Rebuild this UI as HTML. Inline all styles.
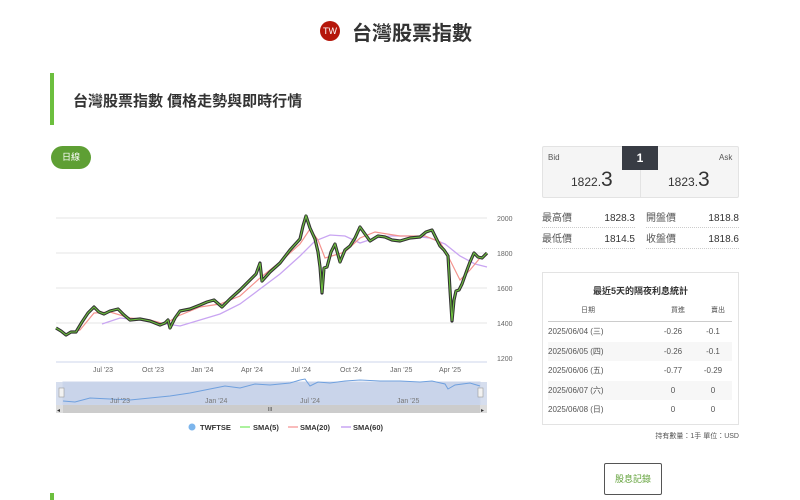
<!DOCTYPE html>
<html><head><meta charset="utf-8"><style>
*{margin:0;padding:0;box-sizing:border-box}
body{width:800px;height:500px;background:#fff;font-family:"Liberation Sans","Noto Sans CJK TC",sans-serif;color:#333;position:relative;overflow:hidden}
.a{position:absolute}
.st{position:absolute;width:93px;height:18px;font-size:10px;color:#555;border-bottom:1px dotted #ccc;display:flex;justify-content:space-between;align-items:center;line-height:1}
.st b{font-weight:normal;color:#333}
</style></head><body>
<div class="a" style="left:320px;top:21px;width:20px;height:20px;border-radius:50%;background:#b5170b;color:#fff;font-size:9px;line-height:20px;text-align:center">TW</div>
<div class="a" style="left:352px;top:17px;font-size:20px;font-weight:bold;color:#333">台灣股票指數</div>
<div class="a" style="left:50px;top:73px;width:4px;height:52px;background:#6cbf3e"></div>
<div class="a" style="left:73px;top:90px;font-size:15px;font-weight:bold;color:#333">台灣股票指數 價格走勢與即時行情</div>
<div class="a" style="left:51px;top:146px;width:40px;height:23px;border-radius:12px;background:#5e9f34;color:#fff;font-size:9px;line-height:23px;text-align:center">日線</div>

<svg class="a" style="left:0;top:0" width="530" height="440">
<g stroke="#e6e6e6" stroke-width="1">
<line x1="56" y1="218" x2="487" y2="218"/><line x1="56" y1="253" x2="487" y2="253"/><line x1="56" y1="288" x2="487" y2="288"/><line x1="56" y1="323" x2="487" y2="323"/>
</g>
<line x1="56" y1="362" x2="487" y2="362" stroke="#ccd6eb"/>
<g font-size="7" fill="#666">
<text x="497" y="221">2000</text><text x="497" y="256">1800</text><text x="497" y="291">1600</text><text x="497" y="326">1400</text><text x="497" y="361">1200</text>
<text x="93" y="372">Jul '23</text><text x="142" y="372">Oct '23</text><text x="191" y="372">Jan '24</text><text x="241" y="372">Apr '24</text><text x="291" y="372">Jul '24</text><text x="340" y="372">Oct '24</text><text x="390" y="372">Jan '25</text><text x="439" y="372">Apr '25</text>
</g>
<polyline fill="none" stroke="#c9a5f2" stroke-width="1.3" points="102,324 120,318 140,320 160,323 180,326 200,320 220,314 240,304 260,289 280,274 300,256 315,241 330,235 345,236 360,243 375,238 390,236 410,236 430,238 445,244 460,256 475,264 487,267"/>
<polyline fill="none" stroke="#f4938e" stroke-width="1.2" points="66,334 80,330 94,313 110,312 130,318 150,320 165,324 178,316 200,307 220,304 240,296 260,278 280,262 300,244 310,229 318,240 325,258 335,255 345,252 360,238 375,232 400,236 425,236 440,242 450,260 460,280 470,270 480,258 487,255"/>
<polyline fill="none" stroke="#333" stroke-width="3.2" stroke-linejoin="round" points="56,328 61,331 66,335 71,332 76,332 82,322 88,313 94,307 99,312 104,314 110,311 118,309 124,315 130,320 140,319 150,321 160,325 165,323 168,320 170,328 175,318 180,311 190,309 200,305 207,302 214,300 222,307 230,299 240,290 248,282 256,274 260,263 262,281 270,272 280,263 290,250 300,239 303,226 306,216 310,228 315,239 318,252 320,267 322,293 324,268 327,267 331,252 335,244 340,262 345,250 350,246 355,238 360,227 365,234 370,241 378,236 385,237 392,240 400,241 410,238 420,237 426,232 432,230 436,238 440,246 444,250 448,256 450,290 452,321 454,300 456,291 459,290 462,284 467,270 470,262 474,253 478,257 482,258 487,253"/>
<polyline fill="none" stroke="#6cbf3e" stroke-width="1.1" points="56,328 61,331 66,335 71,332 76,332 82,322 88,313 94,307 99,312 104,314 110,311 118,309 124,315 130,320 140,319 150,321 160,325 165,323 168,320 170,328 175,318 180,311 190,309 200,305 207,302 214,300 222,307 230,299 240,290 248,282 256,274 260,263 262,281 270,272 280,263 290,250 300,239 303,226 306,216 310,228 315,239 318,252 320,267 322,293 324,268 327,267 331,252 335,244 340,262 345,250 350,246 355,238 360,227 365,234 370,241 378,236 385,237 392,240 400,241 410,238 420,237 426,232 432,230 436,238 440,246 444,250 448,256 450,290 452,321 454,300 456,291 459,290 462,284 467,270 470,262 474,253 478,257 482,258 487,253"/>
<rect x="56" y="382" width="431" height="23" fill="#d6deee"/>
<rect x="63" y="382" width="417" height="23" fill="#c9d4ea" stroke="#ccd6eb"/>
<polyline fill="none" stroke="#6fa0de" stroke-width="1" points="63,401 75,402 90,398 110,399 130,400 150,398 170,396 190,393 210,389 225,386 240,388 255,384 270,385 290,383 300,380 305,379 310,386 318,382 330,383 345,381 360,380 380,381 400,381 420,382 432,381 445,384 448,389 455,385 470,383 480,386"/>
<g font-size="7" fill="#777"><text x="110" y="403">Jul '23</text><text x="205" y="403">Jan '24</text><text x="300" y="403">Jul '24</text><text x="397" y="403">Jan '25</text></g>
<rect x="59" y="388" width="5" height="9" fill="#f2f2f2" stroke="#999" stroke-width="0.6"/>
<rect x="478" y="388" width="5" height="9" fill="#f2f2f2" stroke="#999" stroke-width="0.6"/>
<rect x="56" y="405" width="431" height="8" fill="#ddd"/>
<rect x="63" y="405" width="417" height="8" fill="#ccc"/>
<text x="57" y="412" font-size="6" fill="#333">◂</text><text x="481" y="412" font-size="6" fill="#333">▸</text>
<text x="268" y="411" font-size="5" fill="#333">III</text>
<circle cx="192" cy="427" r="3.5" fill="#7cb5ec"/>
<line x1="240" y1="427" x2="250" y2="427" stroke="#90ed7d" stroke-width="1.5"/>
<line x1="288" y1="427" x2="298" y2="427" stroke="#f7a6a6" stroke-width="1.5"/>
<line x1="341" y1="427" x2="351" y2="427" stroke="#c9a5f2" stroke-width="1.5"/>
<g font-size="7.5" font-weight="bold" fill="#333"><text x="200" y="430">TWFTSE</text><text x="253" y="430">SMA(5)</text><text x="300" y="430">SMA(20)</text><text x="353" y="430">SMA(60)</text></g>
</svg>

<div class="a" style="left:542px;top:146px;width:197px;height:52px;background:#f5f5f5;border:1px solid #e3e3e3;border-radius:2px"></div>
<div class="a" style="left:640px;top:146px;width:1px;height:52px;background:#e3e3e3"></div>
<div class="a" style="left:622px;top:146px;width:36px;height:24px;background:#383c44;color:#fff;font-size:12px;font-weight:bold;text-align:center;line-height:24px">1</div>
<div class="a" style="left:548px;top:153px;font-size:8px;color:#555">Bid</div>
<div class="a" style="left:719px;top:153px;font-size:8px;color:#555">Ask</div>
<div class="a" style="left:571px;top:168px;font-size:12px;color:#333">1822.<span style="font-size:21px">3</span></div>
<div class="a" style="left:668px;top:168px;font-size:12px;color:#333">1823.<span style="font-size:21px">3</span></div>
<div class="st" style="left:542px;top:210px"><span>最高價</span><b>1828.3</b></div>
<div class="st" style="left:646px;top:210px"><span>開盤價</span><b>1818.8</b></div>
<div class="st" style="left:542px;top:231px"><span>最低價</span><b>1814.5</b></div>
<div class="st" style="left:646px;top:231px"><span>收盤價</span><b>1818.6</b></div>

<div class="a" style="left:542px;top:272px;width:197px;height:153px;border:1px solid #e3e3e3"></div>
<div class="a" style="left:542px;top:284px;width:197px;text-align:center;font-size:9px;font-weight:bold;color:#333">最近5天的隔夜利息統計</div>
<div class="a" style="left:548px;top:305px;width:184px;height:17px;border-bottom:1px solid #ccc;font-size:7px;color:#555">
<span class="a" style="left:15px;width:50px;text-align:center">日期</span><span class="a" style="left:110px;width:40px;text-align:center">買進</span><span class="a" style="left:150px;width:40px;text-align:center">賣出</span></div>
<div class="a" style="left:548px;top:322px;width:184px;font-size:8px;color:#555;line-height:19.6px">
<div style="position:relative;height:19.6px">2025/06/04 (三)<span class="a" style="left:110px;width:30px;text-align:center">-0.26</span><span class="a" style="left:150px;width:30px;text-align:center">-0.1</span></div>
<div style="position:relative;height:19.6px;background:#f7f7f7">2025/06/05 (四)<span class="a" style="left:110px;width:30px;text-align:center">-0.26</span><span class="a" style="left:150px;width:30px;text-align:center">-0.1</span></div>
<div style="position:relative;height:19.6px">2025/06/06 (五)<span class="a" style="left:110px;width:30px;text-align:center">-0.77</span><span class="a" style="left:150px;width:30px;text-align:center">-0.29</span></div>
<div style="position:relative;height:19.6px;background:#f7f7f7">2025/06/07 (六)<span class="a" style="left:110px;width:30px;text-align:center">0</span><span class="a" style="left:150px;width:30px;text-align:center">0</span></div>
<div style="position:relative;height:19.6px">2025/06/08 (日)<span class="a" style="left:110px;width:30px;text-align:center">0</span><span class="a" style="left:150px;width:30px;text-align:center">0</span></div>
</div>
<div class="a" style="left:640px;top:431px;width:99px;text-align:right;font-size:7px;color:#555">持有數量：1手 單位：USD</div>
<div class="a" style="left:604px;top:463px;width:58px;height:32px;border:1px solid #555;border-radius:2px;color:#5e9f34;font-size:9px;text-align:center;line-height:30px">股息記錄</div>
<div class="a" style="left:50px;top:493px;width:4px;height:7px;background:#6cbf3e"></div>
</body></html>
